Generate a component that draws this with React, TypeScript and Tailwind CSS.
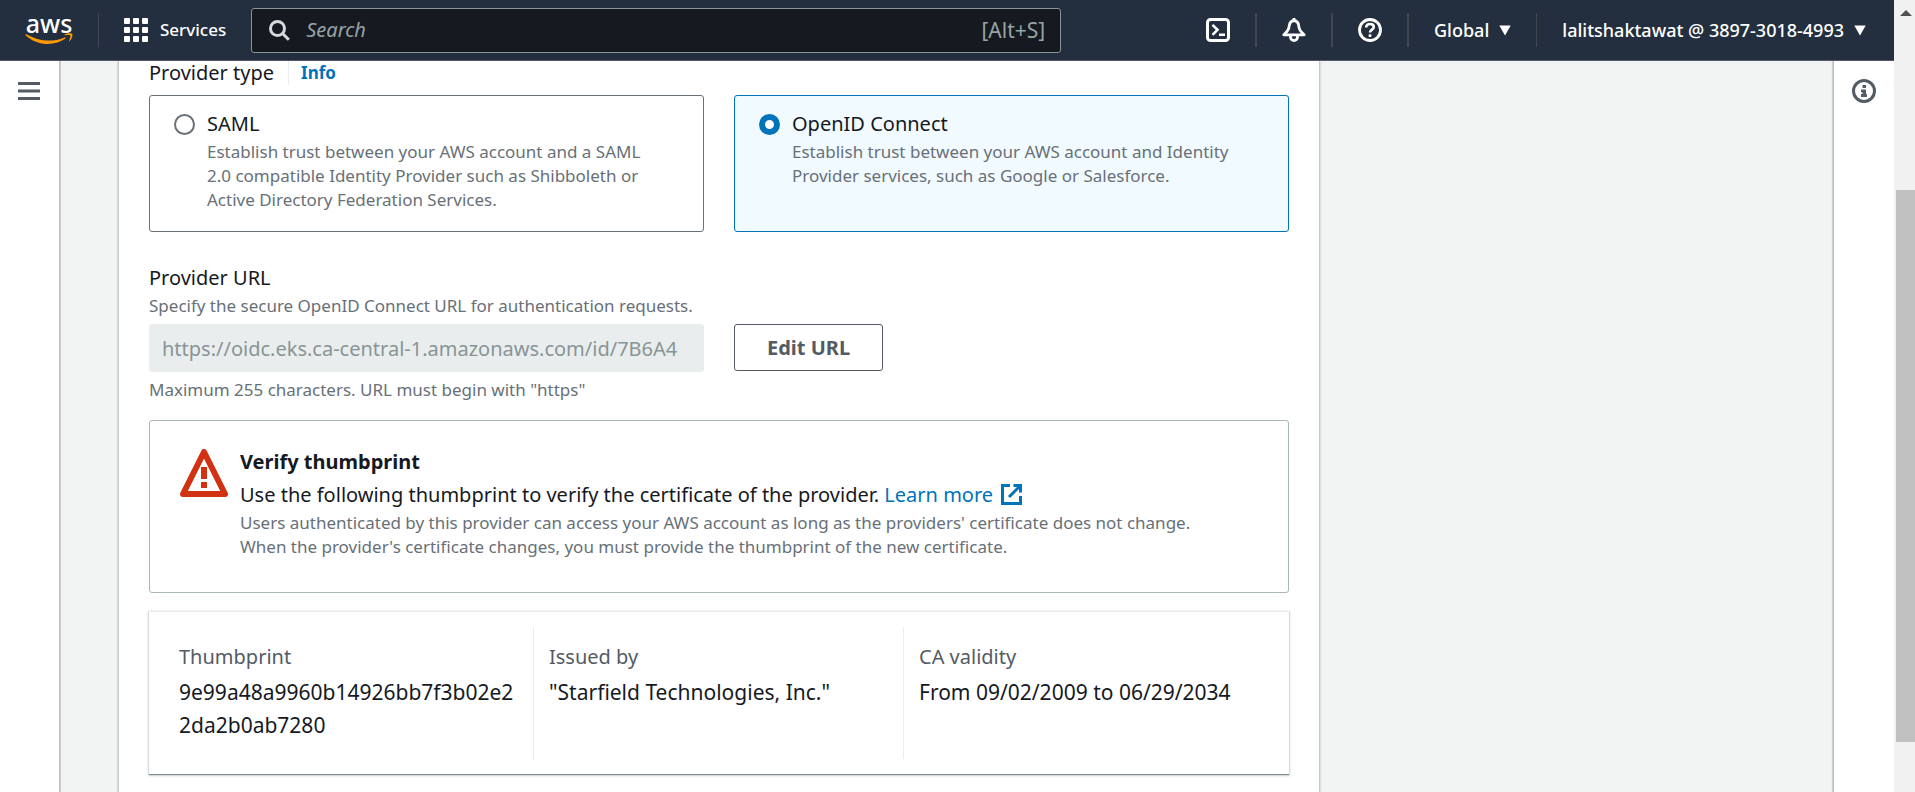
import React from "react";

const tiles = [
  {
    id: "saml",
    label: "SAML",
    description:
      "Establish trust between your AWS account and a SAML 2.0 compatible Identity Provider such as Shibboleth or Active Directory Federation Services.",
  },
  {
    id: "oidc",
    label: "OpenID Connect",
    description:
      "Establish trust between your AWS account and Identity Provider services, such as Google or Salesforce.",
  },
];

function Divider({ wide = false }: { wide?: boolean }) {
  return <span className={wide ? "h-[34px] w-[2px] bg-[#414750]" : "h-[34px] w-px bg-[#414750]"} />;
}

function Caret() {
  return (
    <svg width="12" height="11" viewBox="0 0 12 11" fill="#fff" aria-hidden="true">
      <path d="M0.3 0.5h11.4L6 10.5z" />
    </svg>
  );
}

function Logo() {
  return (
    <a href="#" className="relative block h-[30px] w-12 shrink-0" aria-label="aws home">
      <span className="block text-center text-[25px] leading-4 font-medium text-white">aws</span>
      <svg className="absolute top-[18px] left-0" width="48" height="12" viewBox="0 0 48 12" fill="#ff9900" aria-hidden="true">
        <path d="M0.3 1.6c.3-.6.9-.5 1.5-.1C8.500 5.400 15.800 7.600 23.300 7.600c5.400 0 11.200-1.100 16.300-3.200.9-.4 1.600.5.7 1.200C35.700 9 29 11 23.200 11 14.600 11 7 7.900 1 2.700c-.5-.4-.8-.7-.7-1.100z" />
        <path d="M42.300 3.300c-.6-.8-4-.4-5.500-.2-.5 0-.6-.3-.1-.7 2.700-1.900 7.100-1.300 7.600-.7.500.7-.1 5.100-2.700 7.200-.4.300-.8.200-.6-.300.6-1.400 1.900-4.600 1.300-5.300z" transform="translate(3 -0.800)" />
      </svg>
    </a>
  );
}

function Header() {
  return (
    <header className="flex h-[61px] shrink-0 items-center border-b border-[#545b64] bg-[#232f3e] pr-7 pl-[25px] text-white">
      <Logo />
      <span className="ml-[25px] flex">
        <Divider />
      </span>
      <button type="button" className="ml-[25px] flex items-center gap-3 text-[17px] leading-6 font-medium">
        <svg width="24" height="24" viewBox="0 0 24 24" fill="#fff" aria-hidden="true">
          {[0, 9, 18].map((y) =>
            [0, 9, 18].map((x) => <rect key={`${x}-${y}`} x={x} y={y} width="6" height="6" rx="1" />),
          )}
        </svg>
        Services
      </button>
      <div className="ml-[25px] flex h-[45px] max-w-[810px] min-w-0 flex-1 items-center rounded-[3px] border border-[#879596] bg-[#16191f] px-[15px]">
        <svg className="mr-4 ml-[2px] shrink-0" width="21" height="21" viewBox="0 0 21 21" fill="none" stroke="#d5dbdb" strokeWidth="3" aria-hidden="true">
          <circle cx="8.500" cy="8.500" r="7" />
          <path d="M13.300 13.300l6.500 6.500" />
        </svg>
        <input
          type="search"
          placeholder="Search"
          aria-label="Search"
          className="min-w-0 flex-1 bg-transparent text-xl leading-7 text-white outline-none placeholder:text-[#95a5a6] placeholder:italic"
        />
        <span className="text-[21px] leading-7 text-[#95a5a6]">[Alt+S]</span>
      </div>
      <div className="ml-auto flex items-center gap-[25px]">
        <button type="button" aria-label="CloudShell">
          <svg width="24" height="24" viewBox="0 0 24 24" fill="none" stroke="#fff" aria-hidden="true">
            <rect x="1.500" y="1.500" width="21" height="21" rx="3" strokeWidth="3" />
            <path d="M6.500 6.800l5 5-5 5M13 16.700h6" strokeWidth="2.600" />
          </svg>
        </button>
        <Divider wide />
        <button type="button" aria-label="Notifications">
          <svg width="24" height="24" viewBox="0 0 24 24" fill="none" stroke="#fff" strokeWidth="2.800" strokeLinejoin="round" aria-hidden="true">
            <path d="M12 2.500C9 2.900 7.400 5 7.200 8.200 7 12 4.800 14.200 1.800 16.800h20.400C19.200 14.200 17 12 16.800 8.200 16.600 5 15 2.900 12 2.500z" />
            <path d="M8.500 17.500v1.600a3.500 3.500 0 0 0 7 0v-1.600M12 0v3" />
          </svg>
        </button>
        <Divider wide />
        <button type="button" aria-label="Help">
          <svg width="24" height="24" viewBox="0 0 24 24" fill="none" stroke="#fff" strokeWidth="2.800" aria-hidden="true">
            <circle cx="12" cy="12" r="10.500" />
            <path d="M8.200 9.600V9c0-1.800 1.600-3 3.800-3s3.800 1.200 3.800 3c0 2.700-3.800 2.500-3.800 5.600M12 16.200V19" strokeWidth="2.600" />
          </svg>
        </button>
        <Divider wide />
        <button type="button" className="flex items-center gap-[10px] text-[18px] leading-6 font-medium">
          Global <Caret />
        </button>
        <Divider />
        <button type="button" className="flex items-center gap-[10px] text-[18px] leading-6 font-medium">
          lalitshaktawat @ 3897-3018-4993 <Caret />
        </button>
      </div>
    </header>
  );
}

function ProviderTiles() {
  const [selected, setSelected] = React.useState("oidc");
  return (
    <div role="radiogroup" aria-labelledby="provider-type" className="grid grid-cols-2 gap-[30px]">
      {tiles.map((tile) => (
        <label
          key={tile.id}
          className="flex min-h-[137px] gap-3 rounded-[3px] border border-[#687078] bg-white py-[14px] pr-10 pl-6 has-checked:border-[#0073bb] has-checked:bg-[#f1faff]"
        >
          <input
            type="radio"
            name="provider"
            value={tile.id}
            checked={selected === tile.id}
            onChange={() => setSelected(tile.id)}
            className="mt-1 size-[21px] shrink-0 appearance-none rounded-full border-2 border-[#687078] bg-white checked:border-6 checked:border-[#0073bb]"
          />
          <span>
            <span className="mb-[2px] block text-xl leading-7">{tile.label}</span>
            <span className="block text-[17px] leading-6 text-[#687078]">{tile.description}</span>
          </span>
        </label>
      ))}
    </div>
  );
}

function ProviderUrl() {
  return (
    <section className="mt-[29px]">
      <label htmlFor="provider-url" className="block text-xl leading-[33px]">
        Provider URL
      </label>
      <p className="text-[17px] leading-6 text-[#687078]">
        Specify the secure OpenID Connect URL for authentication requests.
      </p>
      <div className="mt-[6px] grid grid-cols-2 gap-[30px]">
        <input
          id="provider-url"
          disabled
          value="https://oidc.eks.ca-central-1.amazonaws.com/id/7B6A4"
          readOnly
          className="h-12 min-w-0 rounded-[3px] border border-[#eaeded] bg-[#eaeded] px-3 text-xl text-[#879596]"
        />
        <button
          type="button"
          className="h-[47px] justify-self-start rounded-[3px] border border-[#545b64] bg-white px-8 text-xl font-bold text-[#545b64]"
        >
          Edit URL
        </button>
      </div>
      <p className="mt-[6px] text-[17px] leading-6 text-[#687078]">
        Maximum 255 characters. URL must begin with "https"
      </p>
    </section>
  );
}

function VerifyAlert() {
  return (
    <section className="mt-[18px] flex min-h-[173px] gap-3 rounded-[3px] border border-[#aab7b8] px-[30px] pt-6">
      <svg className="mt-1 shrink-0" width="48" height="48" viewBox="0 0 48 48" aria-hidden="true">
        <path d="M24 3L45 45H3z" fill="none" stroke="#d13212" strokeWidth="6" strokeLinejoin="round" />
        <path d="M21 18h6v12h-6zM21 33h6v6h-6z" fill="#d13212" />
      </svg>
      <div>
        <h2 className="text-xl leading-[33px] font-bold">Verify thumbprint</h2>
        <p className="text-xl leading-[33px]">
          Use the following thumbprint to verify the certificate of the provider.{" "}
          <a href="#" className="inline-flex items-center gap-2 text-[#0073bb]">
            Learn more
            <svg width="21" height="21" viewBox="0 0 21 21" fill="none" stroke="#0073bb" strokeWidth="3" aria-hidden="true">
              <path d="M9 1.500H1.500v18h18V12M12.500 1.500h7v7M19.500 1.500L8 13" />
            </svg>
          </a>
        </p>
        <p className="text-[17px] leading-6 text-[#687078]">
          Users authenticated by this provider can access your AWS account as long as the providers' certificate does not change.
          <br />
          When the provider's certificate changes, you must provide the thumbprint of the new certificate.
        </p>
      </div>
    </section>
  );
}

const details = [
  { term: "Thumbprint", value: "9e99a48a9960b14926bb7f3b02e22da2b0ab7280" },
  { term: "Issued by", value: '"Starfield Technologies, Inc."' },
  { term: "CA validity", value: "From 09/02/2009 to 06/29/2034" },
];

function Details() {
  return (
    <dl className="mt-[18px] grid grid-cols-3 border-t border-[#eaeded] bg-white py-[15px] pr-4 pl-[14px] shadow-[0_1px_1px_0_rgba(0,28,36,0.4),0_1px_2px_1px_rgba(0,28,36,0.15)]">
      {details.map((item) => (
        <div key={item.term} className="min-h-[132px] border-l border-[#eaeded] px-[15px] pt-[13px] first:border-l-transparent">
          <dt className="text-xl leading-[33px] text-[#545b64]">{item.term}</dt>
          <dd className="mt-[3px] text-[21px] leading-[33px] break-all">{item.value}</dd>
        </div>
      ))}
    </dl>
  );
}

function Scrollbar() {
  return (
    <div className="flex w-[21px] shrink-0 flex-col bg-[#f1f1f1] pl-[2px]" aria-hidden="true">
      <svg className="mt-[10px] ml-1" width="12" height="6" viewBox="0 0 12 6" fill="#505050">
        <path d="M6 0l6 6H0z" />
      </svg>
      <div className="mt-[174px] h-[552px] bg-[#c1c1c1]" />
    </div>
  );
}

export default function App() {
  return (
    <div className="flex h-screen overflow-hidden font-['Noto_Sans',sans-serif] text-[#16191f]">
      <div className="flex min-w-0 flex-1 flex-col">
        <Header />
        <div className="flex min-h-0 flex-1 bg-[#f2f3f3]">
          <aside className="w-[60px] shrink-0 border-r border-[#b8bfbf] bg-white pt-[21px] pl-[18px] shadow-[1px_0_1px_0_rgba(0,28,36,0.15)]">
            <button type="button" aria-label="Open navigation" className="block">
              <svg width="22" height="18" viewBox="0 0 22 18" fill="#545b64" aria-hidden="true">
                <path d="M0 0h22v3H0zM0 7.500h22v3H0zM0 15h22v3H0z" />
              </svg>
            </button>
          </aside>
          <main className="flex min-w-0 flex-1 overflow-hidden pl-[58px]">
            <div className="w-full max-w-[1202px] shrink-0 border-x border-[#c3caca] bg-white px-[30px] shadow-[0_1px_2px_0_rgba(0,28,36,0.3)]">
              <div className="mb-[10px] flex items-center">
                <h2 id="provider-type" className="mr-[14px] text-xl leading-6">
                  Provider type
                </h2>
                <a href="#" className="border-l border-[#eaeded] pl-3 text-[17px] leading-6 font-bold text-[#0073bb]">
                  Info
                </a>
              </div>
              <ProviderTiles />
              <ProviderUrl />
              <VerifyAlert />
              <Details />
            </div>
          </main>
          <aside className="w-[61px] shrink-0 border-l border-[#b8bfbf] bg-white pt-[18px] pl-[18px] shadow-[-1px_0_1px_0_rgba(0,28,36,0.15)]">
            <button type="button" aria-label="Open help panel" className="block">
              <svg width="24" height="24" viewBox="0 0 24 24" fill="none" aria-hidden="true">
                <circle cx="12" cy="12" r="10.500" stroke="#545b64" strokeWidth="3" />
                <path d="M10.500 6h3.500v3h-3.500zM9 10.500h5V15h1v3H9v-3h1.500v-1.800H9z" fill="#545b64" />
              </svg>
            </button>
          </aside>
        </div>
      </div>
      <Scrollbar />
    </div>
  );
}
